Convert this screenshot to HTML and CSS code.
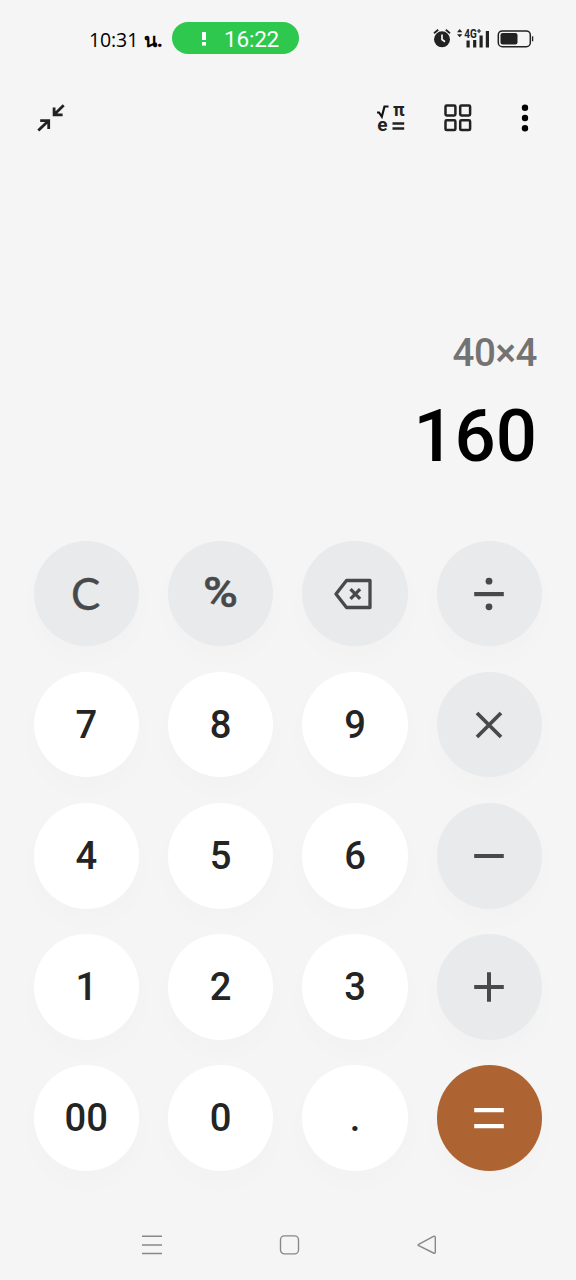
FILE: index.html
```html
<!DOCTYPE html>
<html lang="th">
<head>
    <meta charset="UTF-8">
    <meta name="viewport" content="width=device-width, initial-scale=1.0">
    <title>Calculator</title>
    <link rel="stylesheet" href="styles.css">
</head>
<body>
    <header class="status">
        <span class="clock">10:31 <span class="thai">น.</span></span>
        <div class="pill">
            <svg width="4" height="14" viewBox="0 0 4 14" fill="#fff"><rect width="4" height="8"/><rect y="10" width="4" height="3.6"/></svg>
            <span>16:22</span>
        </div>
        <svg class="status-icons" width="104" height="24" viewBox="0 0 104 24">
            <circle cx="10" cy="13.3" r="8" fill="#222"/>
            <path d="M2 7.2 6.2 3.8M18 7.2 13.8 3.8" stroke="#222" stroke-width="1.8"/>
            <path d="M10 8.5V13.5L13 15.7" fill="none" stroke="#f5f5f5" stroke-width="1.7"/>
            <path d="M25 6.2 27.7 3.1 30.4 6.2ZM25 8.2H30.4L27.7 11.3Z" fill="#222"/>
            <path d="M36.1 14.5V21.5M42.7 14V21.5M49.1 9.5V21.5M55.4 5V21.5" stroke="#222" stroke-width="3.2"/>
            <text class="net" x="32.3" y="11.6" textLength="12.5" lengthAdjust="spacingAndGlyphs">4G</text>
            <path d="M47 2.9V7.1M44.9 5H49.1" stroke="#222" stroke-width="1.2"/>
            <rect x="66.3" y="4.900" width="32" height="15.8" rx="4" fill="none" stroke="#222" stroke-width="1.5"/>
            <rect x="68.5" y="7.1" width="17" height="11.4" rx="2.2" fill="#222"/>
            <path d="M100.6 10.3V15.3" stroke="#222" stroke-width="1.3"/>
        </svg>
    </header>

    <nav class="toolbar">
        <svg width="28" height="28" viewBox="0 0 28 28" fill="none" stroke="#222" stroke-width="2.8">
            <path d="M26.7 1.2 17.3 10.6M17.1 3.5V10.8H25.6M1.3 26.6 11.2 16.900M3.200 16.700H11.700V25"/>
        </svg>
        <svg class="push" width="38" height="36" viewBox="0 -4 38 36">
            <path d="M1 8.500H3L5.800 12.700 8.500 2.500H12.500" fill="none" stroke="#111" stroke-width="2.200"/>
            <text class="sci pi" x="17" y="12">π</text>
            <text class="sci" x="1.200" y="26.500">e</text>
            <path d="M16.500 19.500H28.200M16.500 24.500H28.200" stroke="#222" stroke-width="2.300"/>
        </svg>
        <svg width="28" height="28" viewBox="0 0 28 28" fill="none" stroke="#222" stroke-width="2.5">
            <rect x="1.5" y="1.500" width="9.900" height="9.900" rx="1.200"/>
            <rect x="16.200" y="1.500" width="9.900" height="9.900" rx="1.200"/>
            <rect x="1.500" y="16.200" width="9.900" height="9.900" rx="1.200"/>
            <rect x="16.200" y="16.200" width="9.900" height="9.900" rx="1.200"/>
        </svg>
        <svg class="more" width="8" height="28" viewBox="0 0 8 28"><circle cx="4" cy="3.700" r="3.200"/><circle cx="4" cy="14" r="3.200"/><circle cx="4" cy="24.300" r="3.200"/></svg>
    </nav>

    <section class="display">
        <div class="expression">40×4</div>
        <div class="result">160</div>
    </section>

    <main class="keys">
        <button class="key op clear">C</button>
        <button class="key op percent"><span>%</span></button>
        <button class="key op">
            <svg width="42" height="32" viewBox="0 0 42 32" fill="none" stroke="#48494b" stroke-width="3.300" stroke-linejoin="round">
                <path d="M12.500 2.500H36V29.500H12.500L2 16ZM16.500 11.200 26.100 20.800M26.100 11.200 16.500 20.800"/>
            </svg>
        </button>
        <button class="key op">
            <svg width="32" height="34" viewBox="0 0 32 34" fill="#48494b"><circle cx="16" cy="4.200" r="3.400"/><rect x="1.200" y="15" width="29.600" height="4.200"/><circle cx="16" cy="29.800" r="3.400"/></svg>
        </button>

        <button class="key">7</button>
        <button class="key">8</button>
        <button class="key">9</button>
        <button class="key op">
            <svg width="32" height="32" viewBox="0 0 32 32" stroke="#48494b" stroke-width="3.800"><path d="M4 4 28 28M28 4 4 28"/></svg>
        </button>

        <button class="key">4</button>
        <button class="key">5</button>
        <button class="key">6</button>
        <button class="key op">
            <svg width="32" height="32" viewBox="0 0 32 32" stroke="#48494b" stroke-width="4"><path d="M1.200 16H30.800"/></svg>
        </button>

        <button class="key">1</button>
        <button class="key">2</button>
        <button class="key">3</button>
        <button class="key op">
            <svg width="32" height="32" viewBox="0 0 32 32" stroke="#48494b" stroke-width="4"><path d="M1.200 16H30.800M16 1.200V30.800"/></svg>
        </button>

        <button class="key">00</button>
        <button class="key">0</button>
        <button class="key">.</button>
        <button class="key equals">
            <svg width="32" height="32" viewBox="0 0 32 32" stroke="#fff" stroke-width="4.200"><path d="M1.200 8.200H30.800M1.200 24.200H30.800"/></svg>
        </button>
    </main>

    <footer class="navbar">
        <svg width="22" height="22" viewBox="0 0 22 22" stroke="#888" stroke-width="1.500"><path d="M1 2.200H21M1 11H21M1 19.600H21"/></svg>
        <svg width="22" height="22" viewBox="0 0 22 22" fill="none" stroke="#888" stroke-width="1.400"><rect x="1.500" y="1.900" width="18" height="18" rx="4"/></svg>
        <svg width="22" height="22" viewBox="0 0 22 22" fill="none" stroke="#888" stroke-width="1.400" stroke-linejoin="round"><path d="M2.700 10.300 17.500 2.300Q19.300 1.700 19.300 3.500V18Q19.300 19.800 17.500 19L2.700 11.700Q1.500 11 2.700 10.300Z"/></svg>
    </footer>
</body>
</html>
```

FILE: styles.css
```css
* {
    box-sizing: border-box;
}

body {
    margin: 0;
    width: 576px;
    height: 1280px;
    overflow: hidden;
    background-color: #f5f5f5;
    font-family: Roboto, sans-serif;
    display: flex;
    flex-direction: column;
}

svg {
    display: block;
    flex: none;
}

.status {
    height: 78px;
    padding: 0 40px 2px 89px;
    display: flex;
    align-items: center;
    color: #000;
}

.clock {
    width: 83px;
    padding-top: 3px;
    font-family: "Open Sans", "Noto Sans", sans-serif;
    font-size: 19.5px;
    font-weight: 500;
    line-height: 24px;
    letter-spacing: -0.1px;
    white-space: nowrap;
}

.thai {
    margin-left: 1px;
    font-weight: 700;
}

.pill {
    width: 127px;
    height: 32px;
    padding: 2px 0 0 30px;
    display: flex;
    align-items: center;
    gap: 18px;
    border-radius: 16px;
    background-color: #2dc84d;
    color: #fff;
    font-size: 22.5px;
    font-weight: 400;
    line-height: 32px;
    letter-spacing: -0.2px;
}

.status-icons {
    margin-left: auto;
}

.net {
    font: 700 12px Roboto, sans-serif;
    fill: #222;
}

.toolbar {
    height: 80px;
    padding: 0 47px 0 37px;
    display: flex;
    align-items: center;
    gap: 48px;
}

.toolbar .push {
    margin-left: auto;
    margin-right: -18px;
}

.toolbar .more {
    margin-left: 1px;
}

.sci {
    font: 700 19px Roboto, sans-serif;
    fill: #222;
}

.sci.pi {
    font-size: 18px;
}

.display {
    height: 383px;
    padding: 170px 39px 0 0;
    text-align: right;
    font-weight: 500;
}

.expression {
    font-size: 38.5px;
    line-height: 50px;
    letter-spacing: -0.4px;
    color: #737373;
}

.result {
    margin-top: 16px;
    font-size: 72.5px;
    line-height: 86px;
    color: #000;
}

.keys {
    padding-left: 33.6px;
    display: grid;
    grid-template-columns: repeat(4, 105.4px);
    grid-auto-rows: 105.4px;
    gap: 25.7px 29px;
}

.key {
    display: flex;
    align-items: center;
    justify-content: center;
    padding: 0;
    border: none;
    border-radius: 50%;
    background-color: #fff;
    box-shadow: 0 12px 28px rgba(0, 0, 0, 0.014);
    color: #242424;
    font-family: Roboto, sans-serif;
    font-size: 38.2px;
    font-weight: 500;
}

.op {
    background-color: #e9eaeb;
    color: #48494b;
}

.clear {
    padding: 0 1px 2px 0;
    font-family: Lato, sans-serif;
    font-size: 44px;
    font-weight: 400;
    -webkit-text-stroke: 0.3px #48494b;
}

.percent {
    padding-bottom: 2px;
    font-size: 42px;
    font-weight: 500;
}

.percent span {
    transform: scaleX(1.13);
    -webkit-text-stroke: 0.5px #48494b;
}

.equals {
    background-color: #ae6432;
}

.navbar {
    margin-top: auto;
    height: 70px;
    padding: 0 138px 0 141px;
    display: flex;
    align-items: center;
    justify-content: space-between;
}
```
